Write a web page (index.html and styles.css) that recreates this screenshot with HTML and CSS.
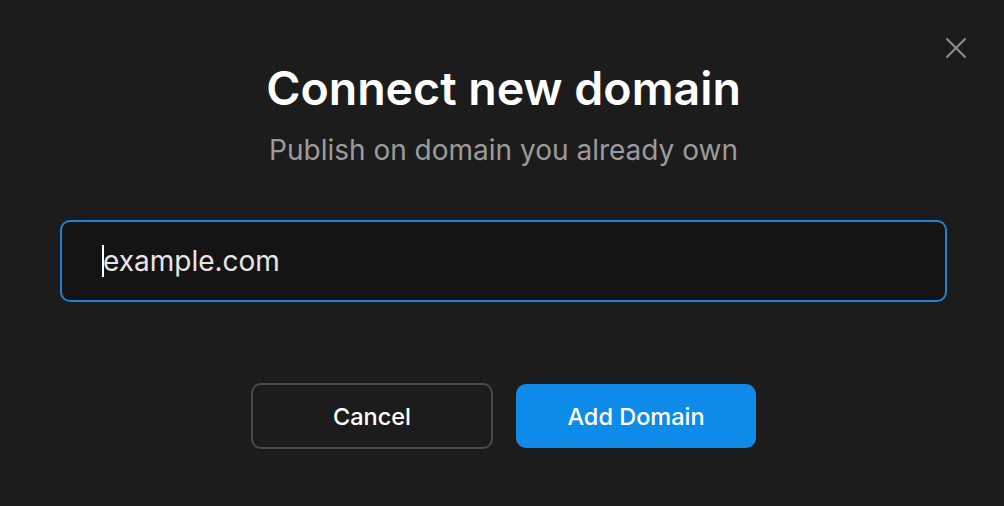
FILE: index.html
```html
<!DOCTYPE html>
<html>
<head>
<meta charset="utf-8">
<link rel="stylesheet" href="styles.css">
</head>
<body>
<div class="dialog">
  <button class="close" aria-label="Close">
    <svg width="22" height="22" viewBox="0 0 22 22"><path d="M1.5 1.5 L20.5 20.5 M20.5 1.5 L1.5 20.5" stroke="#8e8e8e" stroke-width="2" fill="none"/></svg>
  </button>
  <h1 class="title">Connect new domain</h1>
  <p class="subtitle">Publish on domain you already own</p>
  <div class="field"><span class="caret"></span><span class="value">example.com</span></div>
  <div class="actions">
    <button class="btn btn-cancel">Cancel</button>
    <button class="btn btn-primary">Add Domain</button>
  </div>
</div>
</body>
</html>
```
FILE: styles.css
```css
html, body {
  margin: 0;
  padding: 0;
  background: #1c1c1c;
}
body {
  font-family: Inter, "Noto Sans", sans-serif;
  width: 1004px;
  height: 506px;
  overflow: hidden;
}
.dialog {
  position: relative;
  display: flex;
  flex-direction: column;
  align-items: center;
  padding: 60px 57px 0 60px;
}
.close {
  position: absolute;
  top: 37px;
  right: 37px;
  width: 22px;
  height: 22px;
  padding: 0;
  border: 0;
  background: none;
  display: flex;
}
.title {
  margin: 0;
  font-size: 46.5px;
  line-height: 56px;
  font-weight: 600;
  color: #ffffff;
}
.subtitle {
  margin: 18px 0 0;
  font-size: 28px;
  line-height: 32px;
  font-weight: 400;
  color: #9b9b9b;
}
.field {
  align-self: stretch;
  margin-top: 54px;
  height: 82px;
  box-sizing: border-box;
  border: 2px solid #1b84d6;
  border-radius: 10px;
  background: #141414;
  display: flex;
  align-items: center;
  padding-left: 40px;
}
.caret {
  display: inline-block;
  width: 2px;
  height: 32px;
  background: #ffffff;
  margin-right: -1px;
}
.value {
  font-size: 28px;
  color: #e6e6e6;
}
.actions {
  display: flex;
  align-items: center;
  gap: 23px;
  margin-top: 81px;
}
.btn {
  font-family: Inter, "Noto Sans", sans-serif;
  font-size: 23.5px;
  font-weight: 500;
  color: #ffffff;
  border-radius: 10px;
  cursor: pointer;
}
.btn-cancel {
  width: 242px;
  height: 66px;
  background: transparent;
  border: 2px solid #4a4a4a;
}
.btn-primary {
  width: 240px;
  height: 64px;
  background: #0e8be8;
  border: 0;
}
```
